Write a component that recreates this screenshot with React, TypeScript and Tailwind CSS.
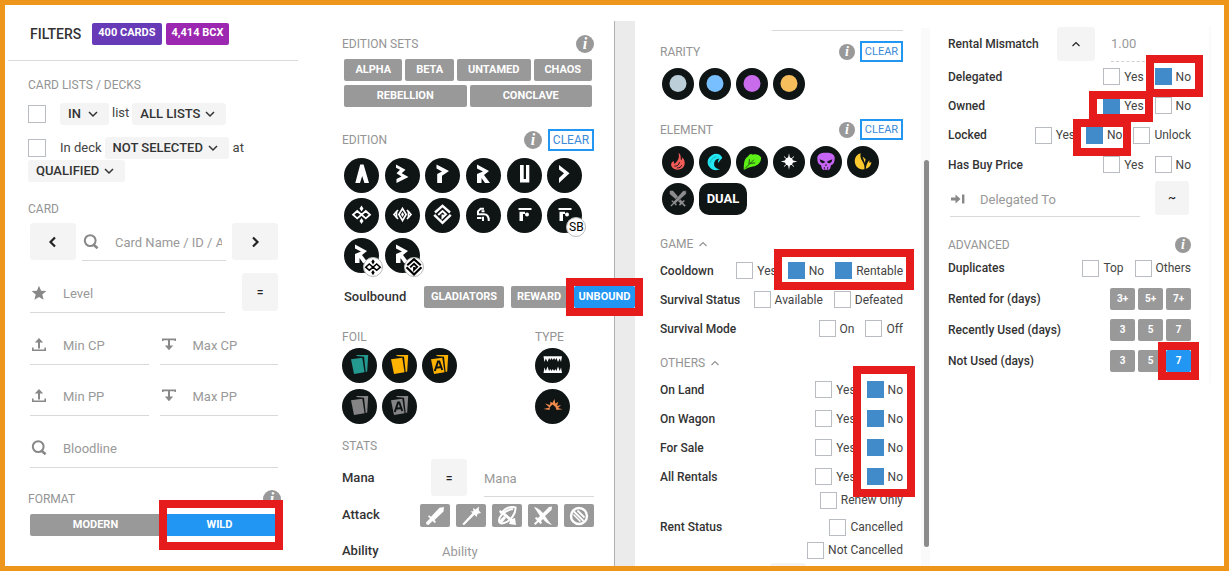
import type { ReactNode } from 'react';

function cx(...parts: (string | false | undefined)[]) {
  return parts.filter(Boolean).join(' ');
}

/* ---------- shared controls ---------- */

function Heading({ children }: { children: ReactNode }) {
  return <h2 className="flex items-center text-xs font-normal text-[#949494]">{children}</h2>;
}

function Info({ small }: { small?: boolean }) {
  return (
    <button
      type="button"
      aria-label="Help"
      className={cx(
        "flex shrink-0 items-center justify-center rounded-full bg-[#999] font-['Liberation_Serif',serif] font-bold italic text-white",
        small ? 'size-4 text-sm leading-4' : 'size-[18px] text-base leading-4',
      )}
    >
      i
    </button>
  );
}

function Clear({ small }: { small?: boolean }) {
  return (
    <button
      type="button"
      className={cx(
        'border-2 border-[#2196f3] text-[#3a8ad8]',
        small ? 'h-[21px] w-[43px] text-[11px] leading-4' : 'h-[22px] w-[46px] text-xs leading-4',
      )}
    >
      CLEAR
    </button>
  );
}

function Tag({ children, active, className }: { children: ReactNode; active?: boolean; className?: string }) {
  return (
    <button
      type="button"
      aria-pressed={!!active}
      className={cx(
        'flex h-[22px] items-center justify-center rounded-xs font-bold text-white',
        active ? 'bg-[#2196f3]' : 'bg-[#999]',
        className || 'text-[11px]',
      )}
    >
      {children}
    </button>
  );
}

function Frame({ className }: { className: string }) {
  return <span className={cx('pointer-events-none absolute z-10 border-8 border-[#e61c1c]', className)} />;
}

function Chevron({ dir, className }: { dir: 'up' | 'down' | 'left' | 'right'; className?: string }) {
  const d = {
    up: 'M2.500 8L6 4.500 9.500 8',
    down: 'M2 4l4 4 4-4',
    left: 'M8 1.5L3.5 6 8 10.5',
    right: 'M4 1.5L8.5 6 4 10.5',
  }[dir];
  return (
    <svg viewBox="0 0 12 12" className={className} fill="none" stroke="currentColor" strokeWidth={dir === 'left' || dir === 'right' ? 2.2 : dir === 'up' ? 1.2 : 1.5}>
      <path d={d} />
    </svg>
  );
}

function Picker({ value, label, className }: { value: string; label: string; className?: string }) {
  return (
    <span className="relative inline-flex">
      <select
        aria-label={label}
        className={cx('h-[22px] appearance-none rounded-[3px] bg-[#f4f4f4] pl-2 text-[13px] font-medium leading-[22px] text-[#333]', className || 'pr-[25px]')}
      >
        <option>{value}</option>
      </select>
      <Chevron dir="down" className="pointer-events-none absolute right-2.5 top-[5px] size-3 text-[#333]" />
    </span>
  );
}

function Soft({ children, label, className }: { children?: ReactNode; label: string; className: string }) {
  return (
    <button type="button" aria-label={label} className={cx('flex shrink-0 items-center justify-center rounded-[3px] bg-[#f4f4f4] text-xs font-medium text-[#222]', className)}>
      {children}
    </button>
  );
}

function Field({ icon, hint, className }: { icon?: ReactNode; hint: string; className: string }) {
  return (
    <label className={cx('flex min-w-0 items-center border-b border-[#d9d9d9] text-[#888]', className)}>
      {icon}
      <input aria-label={hint} placeholder={hint} className="min-w-0 flex-1 bg-transparent pt-[3px] text-[13px] outline-none placeholder:text-[#999]" />
    </label>
  );
}

type Option = { text: string; on?: boolean; frame?: string };

function Check({ text, on, frame }: Option) {
  return (
    <label className="relative flex items-center gap-1 whitespace-nowrap text-xs text-[#444]">
      <input
        type="checkbox"
        defaultChecked={on}
        className="size-[17px] shrink-0 appearance-none border border-[#b9bdc1] bg-white checked:border-[#428bca] checked:bg-[#428bca]"
      />
      {text}
      {frame && <Frame className={frame} />}
    </label>
  );
}

function Row({ label, options, className }: { label?: string; options: Option[]; className?: string }) {
  return (
    <div role="group" aria-label={label} className={cx('flex items-center', className || 'h-[29px]')}>
      {label && <span className="whitespace-nowrap text-xs font-medium text-[#333]">{label}</span>}
      <div className="ml-auto flex gap-[11px]">
        {options.map((o) => (
          <Check key={o.text} {...o} />
        ))}
      </div>
    </div>
  );
}

/* ---------- icons ---------- */

const SearchIcon = ({ className }: { className: string }) => (
  <svg viewBox="0 0 16 16" className={className} fill="none" stroke="currentColor">
    <circle cx="7.2" cy="6.6" r="5.4" strokeWidth="2" />
    <path d="M10 10.200l4.600 4" strokeWidth="2.600" />
  </svg>
);
const StarIcon = () => (
  <svg viewBox="0 0 16 16" className="ml-px mr-4 size-4 shrink-0" fill="currentColor">
    <path d="M8 .8l2.1 4.9 5.3.4-4.1 3.5 1.3 5.2L8 12l-4.6 2.8 1.3-5.2L.6 6.1l5.3-.4z" />
  </svg>
);
const UpIcon = () => (
  <svg viewBox="0 0 16 16" className="ml-px mr-4 size-4 shrink-0" fill="currentColor">
    <path d="M8 1l4.2 4.400H9v6H7v-6H3.800zM1 10.500h1.600v2h10.800v-2H15V14H1z" />
  </svg>
);
const DownIcon = () => (
  <svg viewBox="0 0 16 16" className="ml-px mr-4 size-4 shrink-0" fill="currentColor">
    <path d="M1 1.500h14V4h-1.500v-.8H9v5.300h3.200L8 13.200 3.800 8.500H7V3.200H2.500V4H1z" />
  </svg>
);
const ArrowEndIcon = () => (
  <svg viewBox="0 0 16 16" className="mr-3.5 size-4 shrink-0" fill="currentColor">
    <path d="M1 6.500h4.500V3.500L10.500 8l-5 4.500v-3H1zM12 3.500h2.400v9H12z" />
  </svg>
);

function Disc({ label, children, size = 'size-[35px]', badge }: { label: string; children: ReactNode; size?: string; badge?: ReactNode }) {
  return (
    <button type="button" aria-label={label} className={cx('relative shrink-0 rounded-full bg-[#0f1415] text-white', size)}>
      <svg viewBox="0 0 35 35" className="size-full" fill="white">
        {children}
      </svg>
      {badge}
    </button>
  );
}

const wagon = (
  <g fill="none" stroke="currentColor" strokeWidth="1.8">
    <path d="M13.200 13l4.300 3.700-4.300 3.700-4.200-3.700zM21.800 13l4.200 3.700-4.200 3.700-4.300-3.700z" />
    <path d="M17.500 7.500l2 3-2 3-2-3zM17.500 20l2 3-2 3-2-3z" fill="currentColor" stroke="none" />
  </g>
);
const nested = (
  <g fill="none" stroke="currentColor" strokeWidth="2.400">
    <path d="M10 14.500l7.500-6.700 7.500 6.700M9.200 16.800l8.300 8 8.300-8" />
    <path d="M13.200 17l4.300-4 3.500 3.300-3.500 3.300v-3" strokeWidth="2" />
  </g>
);
const rune = <path d="M11 6.500L23 13l-5 4 6 8h-5l-3.500-5v5H11v-9l6-2.500-6-3z" />;
const flag = (
  <g>
    <path d="M11.500 10h13v2h-13zM12.500 13.700h5.500v2.200h-2V23h-3.500z" />
    <circle cx="20" cy="16.500" r="2" />
  </g>
);

const mini = 'absolute -bottom-1 -right-1 flex size-5 items-center justify-center rounded-full border border-[#bbb] bg-white text-black';

const editions: { label: string; art: ReactNode; badge?: ReactNode }[] = [
  { label: 'Alpha', art: <path d="M16.200 6.500h3.400l5.400 18.500h-4.600l-2.200-7-2.200 7h-4.700z" /> },
  { label: 'Beta', art: <path d="M11 6.500l9.500 5.300-3.800 3.400 6.800 3.800-12 6v-4l5-2.500-5-3.300 3.500-3.400-4-2z" /> },
  { label: 'Promo', art: <path d="M11.500 6.500L24 13l-7 4.700V25h-4.800v-9l4.800-2.500-5.500-3z" /> },
  { label: 'Reward', art: rune },
  { label: 'Untamed', art: <path d="M13 7h3.700v14h2.300V7h3.300v17.500H13z" /> },
  { label: 'Dice', art: <path d="M12 7l10.500 8.200L12 25v-5l5-4.800-5-3.700z" /> },
  { label: 'Gladius', art: wagon },
  {
    label: 'Chaos',
    art: (
      <g fill="none" stroke="white" strokeWidth="1.700">
        <path d="M17.500 10.500l3.600 6-3.600 6-3.600-6zM13 12l-4 4.500 4 4.500M22 12l4 4.500-4 4.500" />
        <path d="M17.500 14l1.500 2.500-1.500 2.500-1.500-2.500z" fill="white" stroke="none" />
        <path d="M11.500 13.500v6M23.500 13.500v6" />
      </g>
    ),
  },
  { label: 'Rift', art: nested },
  {
    label: 'Soulbound',
    art: (
      <path
        d="M18 10.800h-3.500l-2.500 2.500v3h6c3 0 4.800 1.700 4.800 6.700M18.500 13.300h-3M11 20h4.500M17 18.800V23"
        fill="none"
        stroke="white"
        strokeWidth="2"
      />
    ),
  },
  { label: 'Foundation', art: flag },
  {
    label: 'Foundation soulbound',
    art: flag,
    badge: <span className={cx(mini, 'text-xs leading-none')}>SB</span>,
  },
  {
    label: 'Reward chaos',
    art: rune,
    badge: (
      <span className={mini}>
        <svg viewBox="7 6 21 21" className="size-[18px] shrink-0">{wagon}</svg>
      </span>
    ),
  },
  {
    label: 'Reward rebellion',
    art: rune,
    badge: (
      <span className={mini}>
        <svg viewBox="8 6.500 19 20" className="size-[18px] shrink-0">{nested}</svg>
      </span>
    ),
  },
];

function Cards({ tone, letter }: { tone: string; letter?: boolean }) {
  return (
    <g fill={tone}>
      <path d="M14.500 7h11.700l-1 16.500-1.500.5-1.700-15.300-7.500-.7z" />
      <path d="M9 11.300l11.300-1.600 2.200 14.500L12 26z" />
      {letter && (
        <path d="M12.800 23l3.200-9.500h1.300L20.300 22M13.700 19.700l6-.8" fill="none" stroke="#0f1415" strokeWidth="2" />
      )}
    </g>
  );
}

const foils = [
  { label: 'Regular', tone: '#24998f' },
  { label: 'Gold', tone: '#ffb300' },
  { label: 'Gold arcane', tone: '#ffb300', letter: true },
  { label: 'Black', tone: '#858585' },
  { label: 'Black arcane', tone: '#858585', letter: true },
];

const elements = [
  {
    label: 'Fire',
    art: (
      <g>
        <path d="M18 7.500c4 3 1.500 5.500 3 8 1-1 1.200-2 .5-3.500 3.500 2.500 4.500 7.500 2 11-3 4-10 4-12.500.3-2-3-.8-5.800 2-6.800-.2 2 .2 2.800 1 2.800 3.500-3 5.500-6.300 4-11.800z" fill="#f25c58" />
        <path d="M13.500 22c3 .3 5.500-1.500 5.500-4.500M16.500 24c2.500 0 4.500-1 5-3" fill="none" stroke="#0f1415" strokeWidth="1" />
      </g>
    ),
  },
  {
    label: 'Water',
    art: (
      <g>
        <path d="M25.500 13c-1.500-4.500-7-6-11.500-3-5 3-6 9-2.500 13 3 4 8 4 11.500 2.500-4-.5-6.500-2.500-6.500-5.500 0-4 3-6.500 6-6-1.500 1-2 2.500-1.500 4.500 1.200-2 2.500-3.800 4.500-5.500z" fill="#22e6f2" />
        <path d="M12 19c.5-3.500 3-6.500 7-7.500" fill="none" stroke="#119aa5" strokeWidth=".7" />
      </g>
    ),
  },
  {
    label: 'Earth',
    art: (
      <g>
        <path d="M8.500 26c0-6 0-12 5-15 1-2 3-3 5-1.500 3-1 7 0 9 3 0 6-4 9-9 10-3 1-6 1-8 3z" fill="#5cf016" />
        <path d="M10 24.500l9.500-9.500M14.200 20l.5-5.500M15.500 19l5.500-.5" fill="none" stroke="#0f1415" strokeWidth=".8" />
      </g>
    ),
  },
  {
    label: 'Life',
    art: (
      <g fill="white">
        <path d="M17.500 8l1.500 7 7.500 2-7.500 2-1.500 7-1.500-7-7.500-2 7.500-2z" />
        <circle cx="17.500" cy="17" r="4.300" />
        <path d="M12 11.500l4 3.500M23 11.500L19 15M12 22.500l4-3.500M23 22.500L19 19" stroke="white" strokeWidth="1" />
      </g>
    ),
  },
  {
    label: 'Death',
    art: (
      <g>
        <path d="M8 12c2-4.500 6-4.500 9.500-4.500S25 7.500 27 12c0 3 0 6-2 8l-2 1-1 4-2 1.500-2.500-.5-2.500.5-2-1.500-1-4-2-1c-2-2-2-5-2-8z" fill="#c564f5" />
        <path d="M10.500 14.500l5.500 2.300v1.500l-2.500.7-2-1.500zM24.500 14.500L19 16.800v1.500l2.500.7 2-1.500zM17.500 19.500l1 2h-2z" fill="#0f1415" />
        <path d="M15.700 23v3M19.300 23v3" stroke="#0f1415" strokeWidth=".8" />
      </g>
    ),
  },
  {
    label: 'Dragon',
    art: (
      <g fill="#fcca2e">
        <path d="M15 8c-1 3 0 6 2 9 1.500 2.500 2.500 5 2 8.500C13 26.500 8.500 22 8.500 16.500 8.500 12.500 11 9 15 8z" />
        <path d="M17 11.500l2.500 7 .8-4z" />
        <path d="M20.500 25c.5-4.500 2-7.500 4-9.500v3l2.300-1c-.5 4-3 6.500-6.300 7.500z" />
      </g>
    ),
  },
  {
    label: 'Neutral',
    art: (
      <g fill="#8d8d8d">
        <path d="M8.500 8.500h3.500l10 11.500 2-1.500 1 1.200-2 2 3 3-1.300 1.300-3-3-2 2-1.200-1.200 1.300-1.800L8.500 12z" />
        <path d="M26.500 8.500H23L13 20l-2-1.500-1 1.200 2 2-3 3L10.300 26l3-3 2 2 1.200-1.200-1.300-1.800L26.500 12z" stroke="#0f1415" strokeWidth=".5" />
      </g>
    ),
  },
];

const attacks: { label: string; art: ReactNode }[] = [
  { label: 'Melee', art: <path d="M19 1l-.5 4.500-9 8.500 1.500 2-1.300 1L7.500 15 3.500 19 1.500 18.500 1 16.500 5 12.500 3 10.500l1-1.300 2 1.500 8.500-9z" /> },
  { label: 'Magic', art: <path d="M12 2l2.500 1.500L18 .5l-.3 3.800L20 7l-3.300.8L15.500 11l-2-2.300L3 19.300 1.300 18 11.500 7 9.500 5.500l3-.3z" /> },
  {
    label: 'Ranged',
    art: (
      <g>
        <path d="M4 8C7 2 14 0 18.500 1.500 19 7 14 15 7 17c-3 1-5 0-5-2 0-5 6-11 14-12" fill="none" stroke="white" strokeWidth="2" />
        <path d="M3 4l5 3 7 6 3-1 1 7-7-1 1-3-7-6-4-3zM2 15l5-5 2 2-5 6z" />
      </g>
    ),
  },
  { label: 'Mixed', art: <path d="M1 1c4 1 6 3 9 6l6-6 3-.5L18.500 4l-6.500 6c2 3 4 6 7 9-4-1-7-3-9-6l-2 2 1 2-1.500 1-2-2-3 3-1.500-1.500 3-3-2-2 1-1.500 2 1 2-2C5 7 3 4 1 1z" /> },
  {
    label: 'No attack',
    art: (
      <g fill="none" stroke="white">
        <circle cx="10" cy="10" r="8" strokeWidth="2.400" />
        <path d="M5 5.500l9.500 9.500M8.500 4.500l7 7" strokeWidth="1.800" />
        <path d="M4.500 8.500l7 7" strokeWidth="1.500" />
      </g>
    ),
  },
];

/* ---------- columns ---------- */

function CardColumn() {
  return (
    <section className="min-w-0">
      <header className="ml-[3px] mr-3 flex h-14 items-center border-b border-[#d9d9d9] pl-[22px] pt-0.5">
        <h1 className="mr-[11px] text-sm font-medium text-[#333]">FILTERS</h1>
        <span className="mr-1 flex h-[22px] items-center rounded-xs bg-[#673ab7] px-1.5 text-[11px] font-bold text-white">400 CARDS</span>
        <span className="flex h-[22px] items-center rounded-xs bg-[#9c27b0] px-1.5 text-[11px] font-bold text-white">4,414 BCX</span>
      </header>

      <div className="pl-[23px] pr-8 text-[13px] text-[#444]">
        <div className="mt-3.5 flex h-5"><Heading>CARD LISTS / DECKS</Heading></div>
        <div className="mt-2 flex h-[22px] items-center whitespace-nowrap">
          <input type="checkbox" aria-label="Filter by list" className="mr-3.5 size-[18px] appearance-none border border-[#b9bdc1]" />
          <Picker value="IN" label="List mode" className="pr-7" />
          <span className="mx-[3px] pb-0.5">list</span>
          <Picker value="ALL LISTS" label="List" />
        </div>
        <div className="mt-3 flex h-[22px] items-center whitespace-nowrap">
          <input type="checkbox" aria-label="Filter by deck" className="mr-3.5 size-[18px] appearance-none border border-[#b9bdc1]" />
          <span className="mr-[3px]">In deck</span>
          <Picker value="NOT SELECTED" label="Deck" />
          <span className="ml-1">at</span>
        </div>
        <div className="mt-px flex h-[22px]"><Picker value="QUALIFIED" label="Deck status" /></div>

        <div className="mt-[17px] flex h-5"><Heading>CARD</Heading></div>
        <div className="pl-0.5">
          <div className="mt-1 flex h-[38px] gap-1.5">
            <Soft label="Previous" className="h-[37px] w-[46px]"><Chevron dir="left" className="size-3" /></Soft>
            <Field icon={<SearchIcon className="ml-px mr-4 size-4 shrink-0" />} hint="Card Name / ID / Ability" className="flex-1 pr-1" />
            <Soft label="Next" className="h-[37px] w-[46px]"><Chevron dir="right" className="size-3" /></Soft>
          </div>
          <div className="mt-3 flex h-10 gap-[17px]">
            <Field icon={<StarIcon />} hint="Level" className="flex-1" />
            <Soft label="Level comparison" className="h-[38px] w-9">=</Soft>
          </div>
          <div className="mt-3 flex h-10 gap-[11px]">
            <Field icon={<UpIcon />} hint="Min CP" className="flex-1" />
            <Field icon={<DownIcon />} hint="Max CP" className="flex-1" />
          </div>
          <div className="mt-[11px] flex h-10 gap-[11px]">
            <Field icon={<UpIcon />} hint="Min PP" className="flex-1" />
            <Field icon={<DownIcon />} hint="Max PP" className="flex-1" />
          </div>
          <div className="mt-3 flex h-10">
            <Field icon={<SearchIcon className="ml-px mr-4 size-4 shrink-0" />} hint="Bloodline" className="flex-1" />
          </div>
        </div>

        <div className="-mr-[3px] mt-[21px] flex h-5 items-center justify-between">
          <Heading>FORMAT</Heading>
          <Info />
        </div>
        <div className="mt-[5px] flex pl-0.5">
          <Tag className="flex-[131] text-[11px]">MODERN</Tag>
          <div className="relative flex flex-[117]">
            <Tag active className="flex-1 text-[11px]">WILD</Tag>
            <Frame className="-bottom-3.5 -left-0.5 -right-[5px] -top-3.5" />
          </div>
        </div>
      </div>
    </section>
  );
}

function EditionColumn() {
  return (
    <section className="min-w-0 pl-8 pr-5">
      <div className="mt-[29px] flex h-5 items-center justify-between">
        <Heading>EDITION SETS</Heading>
        <Info />
      </div>
      <div className="mt-[5px] flex flex-col gap-1 px-0.5">
        <div className="grid grid-cols-[58fr_48fr_73fr_58fr] gap-[3px]">
          <Tag>ALPHA</Tag>
          <Tag>BETA</Tag>
          <Tag>UNTAMED</Tag>
          <Tag>CHAOS</Tag>
        </div>
        <div className="grid grid-cols-2 gap-[3px]">
          <Tag>REBELLION</Tag>
          <Tag>CONCLAVE</Tag>
        </div>
      </div>

      <div className="mt-[22px] flex h-[22px] items-center justify-end gap-1.5">
        <div className="mr-auto"><Heading>EDITION</Heading></div>
        <Info />
        <Clear />
      </div>
      <div className="mt-[7px] grid grid-cols-6 gap-y-[5px] pl-0.5 pr-1.5">
        {editions.map((e) => (
          <Disc key={e.label} label={e.label} badge={e.badge}>{e.art}</Disc>
        ))}
      </div>

      <div className="mt-[13px] flex h-[22px] items-center gap-[7px] pl-0.5">
        <span className="w-[73px] shrink-0 text-[13px] font-medium text-[#333]">Soulbound</span>
        <Tag className="w-20 shrink-0 text-[11px]">GLADIATORS</Tag>
        <Tag className="w-14 shrink-0 text-[11px]">REWARD</Tag>
        <div className="relative z-10 shrink-0">
          <Tag active className="w-[61px] text-[11px]">UNBOUND</Tag>
          <Frame className="-inset-2" />
        </div>
      </div>

      <div className="mt-[19px] flex justify-between">
        <div className="w-[120px]">
          <div className="flex h-5"><Heading>FOIL</Heading></div>
          <div className="mt-px flex flex-wrap gap-x-[5px] gap-y-1.5">
            {foils.map((f) => (
              <Disc key={f.label} label={f.label}><Cards tone={f.tone} letter={f.letter} /></Disc>
            ))}
          </div>
        </div>
        <div className="w-[59px]">
          <div className="flex h-5"><Heading>TYPE</Heading></div>
          <div className="mt-px flex flex-col gap-1.5">
            <Disc label="Monster">
              <path d="M8.500 8.300h18.500l-1 5.700-1.300-3.500-1.700 3.500-1.500-4-1.200 2-1.200-2-1.300 2-1.300-2-1.200 2-1.200-2-1.600 4-1.700-3.500-1.300 3.500zM8.500 25l1-5.500 1.300 3.500 1.700-4.500 1.600 4.500 1.200-2 1.200 2 1.300-2 1.300 2 1.200-2 1.200 2 1.500-4.500 1.700 4.500 1.300-3.500 1 5.500z" />
            </Disc>
            <Disc label="Summoner">
              <path d="M8.500 20l6-1.500-4.500-4 5 1.500.5-3.500 1.800 1.500L19.500 10l.8 4.500 3-1.500-1.300 4 4-1-3 3 4.500 1.300-6 .7-1-3-3-2.500-2.500 2.500-.5 3z" fill="#f08a4b" />
            </Disc>
          </div>
        </div>
      </div>

      <div className="mt-3 flex h-5"><Heading>STATS</Heading></div>
      <div className="mt-[3px] flex h-[38px] items-start">
        <span className="mr-auto self-center text-[13px] font-medium text-[#333]">Mana</span>
        <Soft label="Mana comparison" className="h-[37px] w-9">=</Soft>
        <Field hint="Mana" className="ml-[17px] h-[38px] w-[110px]" />
      </div>
      <div className="mt-[7px] flex h-[23px] items-center gap-1.5">
        <span className="mr-auto pb-px text-[13px] font-medium text-[#333]">Attack</span>
        {attacks.map((a) => (
          <button key={a.label} type="button" aria-label={a.label} className="flex h-[23px] w-[30px] items-center justify-center rounded-xs bg-[#999]">
            <svg viewBox="0 0 20 20" className="size-5" fill="white">{a.art}</svg>
          </button>
        ))}
      </div>
      <label className="mt-3.5 flex h-5 items-center text-[13px] font-medium text-[#333]">
        <span className="w-[100px]">Ability</span>
        <input placeholder="Ability" className="min-w-0 flex-1 pt-0.5 font-normal outline-none placeholder:text-[#999]" />
      </label>
    </section>
  );
}

const rarities = [
  { label: 'Common', tone: '#bccfd9' },
  { label: 'Rare', tone: '#78bfff' },
  { label: 'Epic', tone: '#c86cec' },
  { label: 'Legendary', tone: '#f5bd5c' },
];

const yesNo: Option[] = [{ text: 'Yes' }, { text: 'No', on: true }];

function StatusColumn() {
  return (
    <section className="flex min-w-0">
      <div className="min-w-0 flex-1 pl-[25px] pr-[18px]">
        <div className="ml-auto mt-[25px] h-px w-[131px] bg-[#d9d9d9]" />
        <div className="mt-2.5 flex h-[21px] items-center gap-[5px]">
          <div className="mr-auto"><Heading>RARITY</Heading></div>
          <Info small />
          <Clear small />
        </div>
        <div className="mt-1.5 flex gap-[5px] pl-0.5">
          {rarities.map((r) => (
            <Disc key={r.label} label={r.label} size="size-8"><circle cx="17.500" cy="17" r="9.300" fill={r.tone} /></Disc>
          ))}
        </div>
        <div className="mt-[19px] flex h-[21px] items-center gap-[5px]">
          <div className="mr-auto"><Heading>ELEMENT</Heading></div>
          <Info small />
          <Clear small />
        </div>
        <div className="mt-1.5 flex flex-wrap gap-[5px] pl-0.5">
          {elements.map((e) => (
            <Disc key={e.label} label={e.label} size="size-8">{e.art}</Disc>
          ))}
          <button type="button" className="h-8 w-12 rounded-[10px] bg-[#0f1415] text-[13px] font-bold text-white">DUAL</button>
        </div>

        <div className="mt-[19px] flex h-5 items-center gap-1 text-[#949494]">
          <Heading>GAME</Heading>
          <Chevron dir="up" className="size-3" />
        </div>
        <div className="relative mt-0.5">
          <Row label="Cooldown" options={[{ text: 'Yes' }, { text: 'No', on: true }, { text: 'Rentable', on: true }]} />
          <Row label="Survival Status" options={[{ text: 'Available' }, { text: 'Defeated' }]} />
          <Row label="Survival Mode" options={[{ text: 'On' }, { text: 'Off' }]} />
          <Frame className="-right-[11px] -top-[7px] h-[41px] w-[140px]" />
        </div>

        <div className="mt-2.5 flex h-5 items-center gap-1 text-[#949494]">
          <Heading>OTHERS</Heading>
          <Chevron dir="up" className="size-3" />
        </div>
        <div className="relative mt-0.5">
          <Row label="On Land" options={yesNo} />
          <Row label="On Wagon" options={yesNo} />
          <Row label="For Sale" options={yesNo} />
          <Row label="All Rentals" options={yesNo} />
          <Frame className="-bottom-1.5 -right-3 -top-[9px] w-[62px]" />
        </div>
        <Row className="h-[18px]" options={[{ text: 'Renew Only' }]} />
        <Row className="mt-2 h-5" label="Rent Status" options={[{ text: 'Cancelled' }]} />
        <Row className="mt-[3px] h-5" options={[{ text: 'Not Cancelled' }]} />
        <div className="mt-[3px] flex justify-end pr-[97px]">
          <Soft label="Rental comparison" className="h-9 w-9" />
        </div>
      </div>
      <div className="mt-[23px] w-[9px] shrink-0 bg-[#fafafa] pl-[3px] pt-[132px]">
        <div className="h-[387px] w-[5px] rounded-full bg-[#8b8b8b]" />
      </div>
    </section>
  );
}

function Days({ label, values, active, className }: { label: string; values: string[]; active?: string; className: string }) {
  return (
    <div className={cx('flex h-[21px] items-center gap-[3px]', className)}>
      <span className="mr-auto whitespace-nowrap text-xs font-medium text-[#333]">{label}</span>
      {values.map((v) => (
        <span key={v} className="relative">
          <Tag active={v === active} className="w-[25px] text-[10px]">{v}</Tag>
          {v === active && <Frame className="-inset-2" />}
        </span>
      ))}
    </div>
  );
}

function AdvancedColumn() {
  return (
    <section className="min-w-0">
      <div className="mr-[13px] mt-[21px] border-r-2 border-[#fafafa] pb-3 pl-[18px] pr-[18px]">
        <div className="flex h-9 items-center">
          <span className="mr-auto whitespace-nowrap text-xs font-medium text-[#333]">Rental Mismatch</span>
          <Soft label="Mismatch direction" className="h-[34px] w-[38px]"><Chevron dir="up" className="size-3" /></Soft>
          <input
            aria-label="Rental mismatch"
            placeholder="1.00"
            className="ml-4 h-[35px] w-20 border-b border-dashed border-[#d0d0d0] text-[13px] outline-none placeholder:text-[#999]"
          />
        </div>
        <div>
          <Row label="Delegated" options={[{ text: 'Yes' }, { text: 'No', on: true, frame: '-left-[9px] -right-3 -top-[13px] -bottom-3' }]} />
          <Row label="Owned" options={[{ text: 'Yes', on: true, frame: '-left-3.5 -right-[9px] -top-1.5 -bottom-2' }, { text: 'No' }]} />
          <Row label="Locked" className="h-[30px]" options={[{ text: 'Yes' }, { text: 'No', on: true, frame: '-left-[13px] -right-[9px] -top-2 -bottom-3' }, { text: 'Unlock' }]} />
          <Row label="Has Buy Price" options={[{ text: 'Yes' }, { text: 'No' }]} />
        </div>
        <div className="mt-0.5 flex h-9 gap-[15px] pl-0.5 pr-0.5">
          <Field icon={<ArrowEndIcon />} hint="Delegated To" className="flex-1" />
          <Soft label="Delegation match" className="h-[34px] w-[34px]">~</Soft>
        </div>

        <div className="mt-[18px] flex h-5 items-center justify-between">
          <Heading>ADVANCED</Heading>
          <Info small />
        </div>
        <Row className="h-[26px]" label="Duplicates" options={[{ text: 'Top' }, { text: 'Others' }]} />
        <Days className="mt-[7px]" label="Rented for (days)" values={['3+', '5+', '7+']} />
        <Days className="mt-2.5" label="Recently Used (days)" values={['3', '5', '7']} />
        <Days className="mt-2.5" label="Not Used (days)" values={['3', '5', '7']} active="7" />
      </div>
    </section>
  );
}

export default function App() {
  return (
    <main className="grid h-screen grid-cols-[305fr_304fr_21px_295fr_294fr] overflow-hidden border-[5px] border-[#ed961b] bg-white font-[Roboto,sans-serif]">
      <CardColumn />
      <EditionColumn />
      <div className="mt-4 border-l border-[#b0b0b0] bg-[#ebebeb]" />
      <StatusColumn />
      <AdvancedColumn />
    </main>
  );
}
